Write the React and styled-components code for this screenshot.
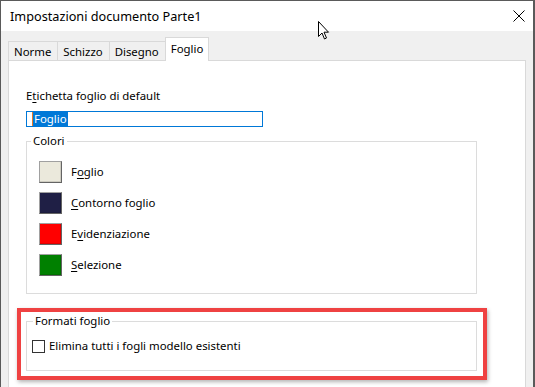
import styled, { createGlobalStyle } from "styled-components";

const GlobalStyle = createGlobalStyle`
  html, body {
    margin: 0;
    padding: 0;
    background: #ffffff;
  }
  body {
    font-family: "Noto Sans", "Open Sans", sans-serif;
    font-size: 11.4px;
    color: #000000;
  }
  * { box-sizing: border-box; }
`;

const Window = styled.div`
  position: relative;
  width: 535px;
  height: 387px;
  border: 1px solid #5a5a5a;
  border-right-width: 2px;
  border-bottom: none;
  background: #f0f0f0;
  overflow: hidden;
`;

const TitleBar = styled.div`
  height: 30px;
  background: #ffffff;
  display: flex;
  align-items: center;
  justify-content: space-between;
  padding: 0 8px 0 9px;
  line-height: 16px;
`;

const Title = styled.span`
  font-size: 12.7px;
  color: #000000;
`;

const CloseButton = styled.div`
  width: 12px;
  height: 12px;
  display: flex;
  margin-top: -1px;
`;

const Cursor = styled.svg`
  position: absolute;
  left: 316px;
  top: 19px;
`;

const TabStrip = styled.div`
  display: flex;
  align-items: flex-end;
  padding-left: 7px;
  margin-top: 6px;
`;

const Tab = styled.div`
  position: relative;
  height: ${(p) => (p.$active ? "24px" : "19px")};
  margin-bottom: ${(p) => (p.$active ? "-1px" : "0")};
  margin-left: ${(p) => (p.$first ? "0" : "-1px")};
  padding: ${(p) => (p.$active ? "1px 5px 3px" : "2px 6px 0 5px")};
  border: 1px solid #d9d9d9;
  border-bottom: none;
  background: ${(p) => (p.$active ? "#ffffff" : "#f0f0f0")};
  z-index: ${(p) => (p.$active ? 1 : 0)};
  display: flex;
  align-items: center;
  line-height: 16px;
`;

const Panel = styled.div`
  margin: 0 7px;
  height: 340px;
  background: #ffffff;
  border: 1px solid #d9d9d9;
  padding: 27px 0 0 17px;
`;

const FieldLabel = styled.div`
  line-height: 16px;
`;

const Key = styled.span`
  text-decoration: underline;
  text-underline-offset: 2px;
`;

const TextBox = styled.div`
  margin-top: 7px;
  width: 237px;
  height: 16px;
  border: 1px solid #0078d7;
  padding: 0 0 0 5px;
  display: flex;
  align-items: stretch;
`;

const Selection = styled.span`
  background: #0078d7;
  color: #ffffff;
  line-height: 14px;
  padding: 0 1px 0 1px;
  border-left: 1px solid #e87a2a;
`;

const Group = styled.fieldset`
  position: relative;
  margin: ${(p) => p.$top}px 0 0 0;
  width: 451px;
  border: 1px solid #dcdcdc;
  padding: ${(p) => p.$pad};
  min-width: 0;
`;

const Legend = styled.legend`
  padding: 0 2px;
  margin-left: ${(p) => p.$shift}px;
  line-height: 16px;
`;

const ColorList = styled.div`
  display: flex;
  flex-direction: column;
  gap: 9px;
`;

const ColorRow = styled.div`
  display: flex;
  align-items: center;
  gap: 9px;
  line-height: 16px;
`;

const Swatch = styled.div`
  width: 23px;
  height: 22px;
  background: ${(p) => p.$color};
  border: 1px solid #a0a0a0;
  border-right-color: #646464;
  border-bottom-color: #646464;
  box-shadow: inset -1px -1px 0 rgba(0, 0, 0, 0.12);
`;

const CheckRow = styled.label`
  display: flex;
  align-items: center;
  gap: 4px;
  line-height: 16px;
`;

const CheckBox = styled.span`
  width: 13px;
  height: 13px;
  border: 1px solid #333333;
  background: #ffffff;
`;

/* annotation frame drawn over the "Formati foglio" group */
const Highlight = styled.div`
  position: absolute;
  left: -10px;
  top: -21px;
  width: 470px;
  height: 72px;
  border: 4px solid #ef4242;
  box-shadow: 1px 2px 4px rgba(0, 0, 0, 0.3);
  pointer-events: none;
`;

const colors = [
  { id: "foglio", color: "#ebe9dc", label: ["F", "o", "glio"] },
  { id: "contorno", color: "#1f1f45", label: ["", "C", "ontorno foglio"] },
  { id: "evid", color: "#ff0000", label: ["E", "v", "idenziazione"] },
  { id: "sel", color: "#008000", label: ["", "S", "elezione"] },
];

const tabs = ["Norme", "Schizzo", "Disegno", "Foglio"];

export default function App() {
  return (
    <>
      <GlobalStyle />
      <Window>
        <TitleBar>
          <Title>Impostazioni documento Parte1</Title>
          <CloseButton>
            <svg width="12" height="12" viewBox="0 0 12 12">
              <path d="M0.5 0.5 L11.5 11.5 M11.5 0.5 L0.5 11.5" stroke="#000" strokeWidth="1" />
            </svg>
          </CloseButton>
        </TitleBar>

        <TabStrip>
          {tabs.map((t, i) => (
            <Tab key={t} $first={i === 0} $active={t === "Foglio"}>
              {t}
            </Tab>
          ))}
        </TabStrip>

        <Panel>
          <FieldLabel>
            E<Key>t</Key>ichetta foglio di default
          </FieldLabel>
          <TextBox>
            <Selection>Foglio</Selection>
          </TextBox>

          <Group $top={6} $pad="12px 12px 17px 12px">
            <Legend $shift={-8}>Colori</Legend>
            <ColorList>
              {colors.map((c) => (
                <ColorRow key={c.id}>
                  <Swatch $color={c.color} />
                  <span>
                    {c.label[0]}
                    <Key>{c.label[1]}</Key>
                    {c.label[2]}
                  </span>
                </ColorRow>
              ))}
            </ColorList>
          </Group>

          <Group $top={19} $pad="9px 6px 16px 5px">
            <Legend $shift={1}>Formati foglio</Legend>
            <CheckRow>
              <CheckBox />
              <span>Elimina tutti i fogli modello esistenti</span>
            </CheckRow>
            <Highlight />
          </Group>
        </Panel>

        <Cursor width="13" height="21" viewBox="0 0 13 21">
          <path
            d="M1.5 1.5 L1.5 16.5 L5 13 L7.5 19 L9.5 18 L7 12.2 L11.5 12.2 Z"
            fill="#ffffff"
            stroke="#000000"
            strokeWidth="1"
            strokeLinejoin="miter"
          />
        </Cursor>
      </Window>
    </>
  );
}
